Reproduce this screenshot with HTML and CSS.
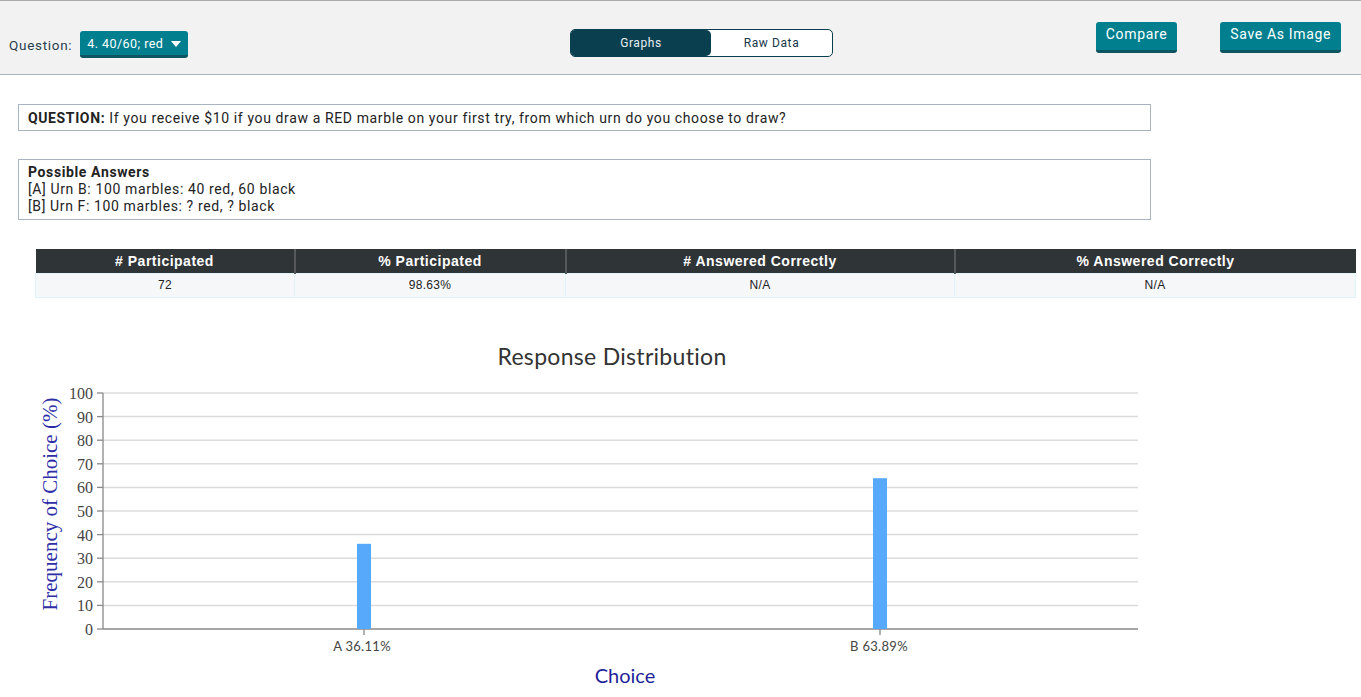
FILE: index.html
```html
<!doctype html>
<html>
<head>
<meta charset="utf-8">
<link rel="stylesheet" href="styles.css">
</head>
<body>
<div class="top_bar">
	<div class="q_pick">
		<span class="q_label">Question:</span>
		<div class="q_select">4. 40/60; red <span class="caret"></span></div>
	</div>
	<div class="tabs">
		<div class="tab on">Graphs</div>
		<div class="tab">Raw Data</div>
	</div>
	<div class="tools">
		<div class="btn">Compare</div>
		<div class="btn">Save As Image</div>
	</div>
</div>

<div class="q_box"><b>QUESTION:</b> If you receive $10 if you draw a RED marble on your first try, from which urn do you choose to draw?</div>

<div class="a_box">
	<b>Possible Answers</b><br>
	[A] Urn B: 100 marbles: 40 red, 60 black<br>
	[B] Urn F: 100 marbles: ? red, ? black
</div>

<table class="stats">
	<tr>
		<th class="c1"># Participated</th>
		<th class="c2">% Participated</th>
		<th class="c3"># Answered Correctly</th>
		<th class="c4">% Answered Correctly</th>
	</tr>
	<tr>
		<td>72</td>
		<td>98.63%</td>
		<td>N/A</td>
		<td>N/A</td>
	</tr>
</table>

<svg class="chart" viewBox="0 300 1361 397" width="1361" height="397">
	<text class="c_title" x="612" y="364" text-anchor="middle">Response Distribution</text>
	<g class="grid">
		<line x1="103" y1="392" x2="1138" y2="392"/>
		<line x1="103" y1="415.6" x2="1138" y2="415.6"/>
		<line x1="103" y1="439.2" x2="1138" y2="439.2"/>
		<line x1="103" y1="462.8" x2="1138" y2="462.8"/>
		<line x1="103" y1="486.4" x2="1138" y2="486.4"/>
		<line x1="103" y1="510" x2="1138" y2="510"/>
		<line x1="103" y1="533.6" x2="1138" y2="533.6"/>
		<line x1="103" y1="557.2" x2="1138" y2="557.2"/>
		<line x1="103" y1="580.8" x2="1138" y2="580.8"/>
		<line x1="103" y1="604.4" x2="1138" y2="604.4"/>
	</g>
	<g class="axis">
		<line x1="103" y1="392" x2="103" y2="628"/>
		<line x1="103" y1="628" x2="1138" y2="628"/>
		<line x1="97" y1="392" x2="103" y2="392"/>
		<line x1="97" y1="415.6" x2="103" y2="415.6"/>
		<line x1="97" y1="439.2" x2="103" y2="439.2"/>
		<line x1="97" y1="462.8" x2="103" y2="462.8"/>
		<line x1="97" y1="486.4" x2="103" y2="486.4"/>
		<line x1="97" y1="510" x2="103" y2="510"/>
		<line x1="97" y1="533.6" x2="103" y2="533.6"/>
		<line x1="97" y1="557.2" x2="103" y2="557.2"/>
		<line x1="97" y1="580.8" x2="103" y2="580.8"/>
		<line x1="97" y1="604.4" x2="103" y2="604.4"/>
		<line x1="97" y1="628" x2="103" y2="628"/>
		<line x1="364" y1="628" x2="364" y2="634"/>
		<line x1="880" y1="628" x2="880" y2="634"/>
	</g>
	<g class="y_ticks" text-anchor="end">
		<text x="93" y="398">100</text>
		<text x="93" y="421.6">90</text>
		<text x="93" y="445.2">80</text>
		<text x="93" y="468.8">70</text>
		<text x="93" y="492.4">60</text>
		<text x="93" y="516">50</text>
		<text x="93" y="539.6">40</text>
		<text x="93" y="563.2">30</text>
		<text x="93" y="586.8">20</text>
		<text x="93" y="610.4">10</text>
		<text x="93" y="634">0</text>
	</g>
	<text class="y_title" transform="translate(57,503) rotate(-90)" text-anchor="middle">Frequency of Choice (%)</text>
	<rect class="bar" x="357" y="542.8" width="14" height="85.2"/>
	<rect class="bar" x="873" y="477.2" width="14" height="150.8"/>
	<text class="x_ticks" x="362" y="650" text-anchor="middle">A 36.11%</text>
	<text class="x_ticks" x="879" y="650" text-anchor="middle">B 63.89%</text>
	<text class="x_title" x="625" y="682" text-anchor="middle">Choice</text>
</svg>
</body>
</html>
```

FILE: styles.css
```css
*{margin:0; padding:0; box-sizing:border-box;}
body{font-family:Roboto, "Liberation Sans", sans-serif; color:#222; background:#fff;}

.top_bar{display:grid; grid-template-columns:570px 263px 1fr; height:75px; background:#f2f2f2; border-top:1px solid #aaa; border-bottom:1px solid #a9b4c2;}
.q_pick{display:flex; align-items:center; padding:30px 0 0 9px; align-self:start;}
.q_label{font-size:13.5px; color:#2b3e4c; letter-spacing:0.7px; margin-right:8px;}
.q_select{height:27px; width:108px; background:#017f8f; border-bottom:3px solid #0c5561; border-radius:3px; color:#fff; font-size:12.5px; padding:5px 0 0 7px; position:relative; letter-spacing:0.45px;}
.q_select .caret{position:absolute; right:7px; top:10px; border:5px solid transparent; border-top:6px solid #fff; border-bottom:0;}

.tabs{display:flex; margin-top:28px; height:28px; border:1px solid #0a3f50; border-radius:5px; overflow:hidden; background:#fff; align-self:start;}
.tab{flex:1; text-align:center; font-size:12px; line-height:26px; color:#17384a; letter-spacing:0.6px;}
.tab.on{background:#0a3f50; color:#e6eef2; border-radius:0 5px 5px 0; flex:0 0 140px;}

.tools{display:flex; justify-content:flex-end; gap:43px; padding:21px 20px 0 0; align-self:start;}
.btn{height:31px; padding:4px 10px 0; background:#017f8f; border-bottom:3px solid #0c5561; border-radius:3px; color:#fff; font-size:14px; letter-spacing:0.65px;}

.q_box{margin:29px 0 0 18px; width:1133px; height:27px; border:1px solid #a9b4c2; padding:5px 9px 0; font-size:14px; letter-spacing:0.62px;}
.a_box{margin:28px 0 0 18px; width:1133px; height:61px; border:1px solid #a9b4c2; padding:4px 9px; font-size:14px; line-height:17px; letter-spacing:0.62px;}

.stats{margin:29px 0 0 35px; width:1321px; border-collapse:collapse; font-family:"Liberation Sans", Arial, sans-serif; text-align:center;}
.stats th{background:#2f3437; color:#fff; font-size:14px; height:24px; border-left:2px solid #55595c; letter-spacing:0.5px;}
.stats th:first-child{border-left:0;}
.stats td{background:#f5f7f9; font-size:12px; height:24px; border:1px solid #dff3f8; color:#222; letter-spacing:0.3px;}
.stats .c1{width:259px;}
.stats .c2{width:271px;}
.stats .c3{width:389px;}

.chart{display:block; margin-top:3px;}
.c_title{font-family:Lato, sans-serif; font-size:23px; fill:#333; letter-spacing:0.3px;}
.grid line{stroke:#dcdcdc; stroke-width:1.5;}
.axis line{stroke:#888; stroke-width:1.3;}
.y_ticks text{font-family:"Liberation Serif", serif; font-size:16px; fill:#444;}
.y_title{font-family:"Liberation Serif", serif; font-size:21px; fill:#2e2ea8;}
.bar{fill:#56a9fb;}
.x_ticks{font-family:Lato, sans-serif; font-size:13px; fill:#444; letter-spacing:0.3px;}
.x_title{font-family:Lato, sans-serif; font-size:20px; fill:#1f1f99;}
```
